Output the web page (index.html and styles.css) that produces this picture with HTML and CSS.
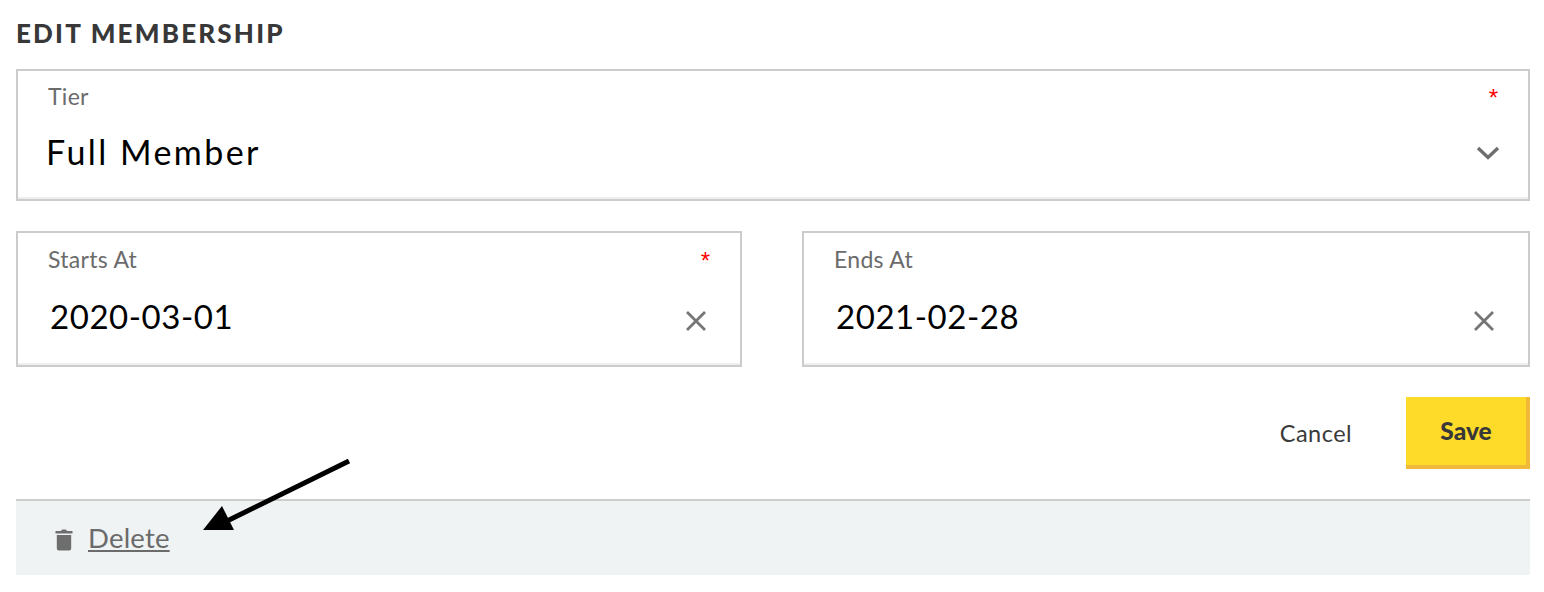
FILE: index.html
```html
<!DOCTYPE html>
<html lang="en">
<head>
<meta charset="utf-8">
<title>Edit Membership</title>
<link rel="stylesheet" href="styles.css">
</head>
<body>
<main class="page">
  <h1 class="title">EDIT MEMBERSHIP</h1>
  <div class="field field-tier">
    <div class="field-head"><label class="label">Tier</label><span class="req">*</span></div>
    <div class="field-body">
      <span class="value value-tier">Full Member</span>
      <svg class="icon-chevron" width="24" height="14" viewBox="0 0 24 14"><path d="M2 2 L12 11.5 L22 2" fill="none" stroke="#6e6e6e" stroke-width="3.4"/></svg>
    </div>
  </div>
  <div class="date-row">
    <div class="field field-date">
      <div class="field-head"><label class="label">Starts At</label><span class="req">*</span></div>
      <div class="field-body">
        <span class="value">2020-03-01</span>
        <svg class="icon-x" width="20" height="20" viewBox="0 0 20 20"><path d="M1 1 L19 19 M19 1 L1 19" fill="none" stroke="#757575" stroke-width="2.8"/></svg>
      </div>
    </div>
    <div class="field field-date">
      <div class="field-head"><label class="label">Ends At</label></div>
      <div class="field-body">
        <span class="value">2021-02-28</span>
        <svg class="icon-x" width="20" height="20" viewBox="0 0 20 20"><path d="M1 1 L19 19 M19 1 L1 19" fill="none" stroke="#757575" stroke-width="2.8"/></svg>
      </div>
    </div>
  </div>
  <div class="actions">
    <button class="btn-cancel" type="button">Cancel</button>
    <button class="btn-save" type="button">Save</button>
  </div>
  <footer class="footer">
    <svg class="icon-trash" width="18" height="22" viewBox="0 0 18 22"><path d="M6 2 L7 0.5 H11 L12 2 H17.5 V4.5 H0.5 V2 Z M1.8 6 H16.2 V19.5 A2 2 0 0 1 14.2 21.5 H3.8 A2 2 0 0 1 1.8 19.5 Z" fill="#6e6e6e"/></svg>
    <a class="delete" href="#">Delete</a>
  </footer>
  <svg class="arrow" width="160" height="80" viewBox="0 0 160 80"><path d="M146 2 L22 63" stroke="#000" stroke-width="5" fill="none"/><path d="M0 71 L19 47 L31 71 Z" fill="#000"/></svg>
</main>
</body>
</html>
```
FILE: styles.css
```css
* { box-sizing: border-box; }
html, body { margin: 0; padding: 0; background: #fff; }
body { font-family: "Lato", "Liberation Sans", sans-serif; }
.page { position: relative; width: 1544px; height: 592px; padding: 0 14px 0 16px; }
.title {
  margin: 0; height: 69px; padding-top: 18px;
  font-size: 26px; line-height: 30px; font-weight: 900; letter-spacing: 2.2px; color: #383838;
}
.field {
  border: 2px solid #ccc; background: #fff;
  box-shadow: inset 0 -2px 0 #eee;
  display: flex; flex-direction: column;
}
.field-tier { height: 132px; padding: 12px 30px 0 30px; }
.date-row { display: grid; grid-template-columns: 726px 1fr; gap: 60px; margin-top: 30px; }
.field-date { height: 136px; padding: 13px 30px 0 30px; }
.field-head { display: flex; justify-content: space-between; height: 26px; }
.label { font-size: 23px; line-height: 26px; letter-spacing: 0.3px; color: #6b6b6b; }
.req { font-size: 24px; line-height: 30px; color: #f00; font-family: "Liberation Sans", sans-serif; }
.field-body { display: flex; justify-content: space-between; align-items: center; margin-top: 23px; }
.value { font-size: 33px; line-height: 42px; color: #000; letter-spacing: 0.55px; margin-left: 2px; }
.value-tier { font-size: 34px; letter-spacing: 2.45px; margin-left: -2px; margin-top: -1px; }
.icon-chevron { margin-right: -2px; }
.icon-x { margin-top: 9px; margin-right: 4px; }
.actions { display: flex; justify-content: flex-end; align-items: center; gap: 54px; margin-top: 30px; height: 72px; }
.btn-cancel {
  border: 0; background: none; padding: 0; font: inherit; font-size: 23.5px; letter-spacing: 0.45px; color: #3a3a3a;
}
.btn-save {
  width: 124px; height: 72px; border: 0;
  background: #ffdb29; box-shadow: inset -4px -4px 0 #f0b93a;
  font: inherit; font-size: 24.5px; font-weight: 900; color: #383838; padding: 0 4px 6px 0;
}
.footer {
  margin-top: 30px; height: 76px; border-top: 2px solid #ccc; background: #f0f3f4;
  display: flex; align-items: center; padding: 4px 0 0 39px; gap: 15px;
}
.delete { font-size: 27.5px; line-height: 34px; color: #6b6b6b; text-decoration: underline; letter-spacing: 0.2px; margin-bottom: 4px; }
.arrow { position: absolute; left: 203px; top: 459px; }
```
